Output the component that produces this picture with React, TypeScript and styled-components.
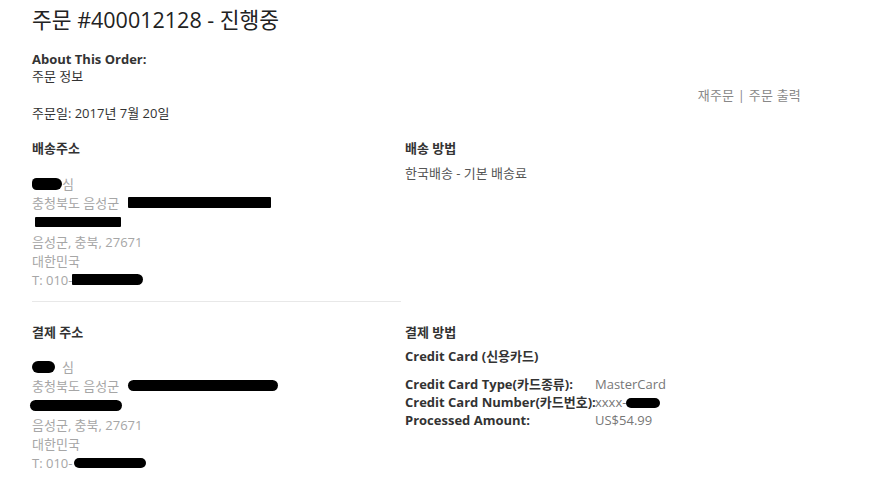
import React from "react";
import styled, { createGlobalStyle } from "styled-components";

const GlobalStyle = createGlobalStyle`
  html, body { margin: 0; padding: 0; background: #fff; }
  body {
    font-family: "Open Sans", "Noto Sans CJK KR", sans-serif;
    font-size: 13px;
    color: #333;
  }
`;

const Page = styled.div`
  padding: 5px 74px 0 32px;
  width: 875px;
  box-sizing: border-box;
`;

const Title = styled.h1`
  margin: 0;
  font-size: 21.5px;
  font-weight: 400;
  line-height: 30px;
  color: #222;
`;

const InfoRow = styled.div`
  display: flex;
  justify-content: space-between;
  align-items: flex-start;
  margin-top: 16px;
`;

const InfoBlock = styled.div`
  display: flex;
  flex-direction: column;
`;

const Strong = styled.div`
  font-weight: 700;
  line-height: 17px;
  color: #333;
`;

const Plain = styled.div<{ $top?: number; $tone?: string }>`
  line-height: 17px;
  color: ${(p) => p.$tone || "#333"};
  margin-top: ${(p) => p.$top || 0}px;
`;

const Actions = styled.div`
  margin-top: 36px;
  color: #888;
  line-height: 17px;
  letter-spacing: 0.2px;
`;

const Grid = styled.div`
  display: grid;
  grid-template-columns: 369px 1fr;
  column-gap: 4px;
  margin-top: 18px;
`;

const Section = styled.div<{ $pad?: number }>`
  padding-top: ${(p) => p.$pad || 0}px;
`;

const Heading = styled.div`
  font-weight: 700;
  line-height: 17px;
  color: #333;
`;

const Address = styled.div<{ $top: number }>`
  margin-top: ${(p) => p.$top}px;
  color: #a6a6a6;
`;

const Line = styled.div`
  display: flex;
  align-items: center;
  height: 19.2px;
  white-space: nowrap;
`;

const Blot = styled.span<{ $w: number; $h?: number; $r?: string; $ml?: number }>`
  display: inline-block;
  flex: none;
  width: ${(p) => p.$w}px;
  height: ${(p) => p.$h || 11}px;
  background: #000;
  border-radius: ${(p) => p.$r || "2px"};
  margin-left: ${(p) => p.$ml || 0}px;
`;

const Divider = styled.hr`
  grid-column: 1 / 2;
  border: 0;
  border-top: 1px solid #e8e8e8;
  margin: 12px 0 0;
  width: 369px;
`;

const Spacer = styled.div``;

const MethodText = styled.div`
  margin-top: 8px;
  line-height: 17px;
  color: #555;
`;

const CardTitle = styled.div`
  margin-top: 7px;
  font-weight: 700;
  line-height: 17px;
  color: #333;
`;

const CardTable = styled.div`
  margin-top: 11px;
  display: grid;
  grid-template-columns: 190px 1fr;
  row-gap: 1px;
  line-height: 17px;
`;

const CardLabel = styled.div`
  font-weight: 700;
  color: #333;
  white-space: nowrap;
`;

const CardValue = styled.div`
  color: #777;
  display: flex;
  align-items: center;
  white-space: nowrap;
`;

const Name = styled.span<{ $ml?: number }>`
  margin-left: ${(p) => p.$ml || 0}px;
`;

export default function App() {
  return (
    <>
      <GlobalStyle />
      <Page>
        <Title>주문 #400012128 - 진행중</Title>
        <InfoRow>
          <InfoBlock>
            <Strong>About This Order:</Strong>
            <Plain>주문 정보</Plain>
            <Plain $top={20}>주문일: 2017년 7월 20일</Plain>
          </InfoBlock>
          <Actions>재주문 | 주문 출력</Actions>
        </InfoRow>

        <Grid>
          <Section $pad={0}>
            <Heading>배송주소</Heading>
            <Address $top={17}>
              <Line>
                <Blot $w={30} $h={12} $r="6px 8px 8px 6px" />
                <Name>심</Name>
              </Line>
              <Line>
                충청북도 음성군
                <Blot $w={143} $h={11} $r="1px" $ml={9} />
              </Line>
              <Line>
                <Blot $w={86} $h={10} $r="1px" $ml={3} />
              </Line>
              <Line>음성군, 충북, 27671</Line>
              <Line>대한민국</Line>
              <Line>
                T: 010-
                <Blot $w={71} $h={11} $r="1px 6px 6px 1px" />
              </Line>
            </Address>
          </Section>
          <Section>
            <Heading>배송 방법</Heading>
            <MethodText>한국배송 - 기본 배송료</MethodText>
          </Section>

          <Divider />
          <Spacer />

          <Section $pad={22}>
            <Heading>결제 주소</Heading>
            <Address $top={16}>
              <Line>
                <Blot $w={23} $h={12} $r="6px" />
                <Name $ml={7}>심</Name>
              </Line>
              <Line>
                충청북도 음성군
                <Blot $w={150} $h={11} $r="6px" $ml={9} />
              </Line>
              <Line>
                <Blot $w={92} $h={11} $r="6px" $ml={-2} />
              </Line>
              <Line>음성군, 충북, 27671</Line>
              <Line>대한민국</Line>
              <Line>
                T: 010-
                <Blot $w={72} $h={10} $r="5px" $ml={2} />
              </Line>
            </Address>
          </Section>
          <Section $pad={22}>
            <Heading>결제 방법</Heading>
            <CardTitle>Credit Card (신용카드)</CardTitle>
            <CardTable>
              <CardLabel>Credit Card Type(카드종류):</CardLabel>
              <CardValue>MasterCard</CardValue>
              <CardLabel>Credit Card Number(카드번호):</CardLabel>
              <CardValue>
                xxxx-
                <Blot $w={34} $h={10} $r="5px" />
              </CardValue>
              <CardLabel>Processed Amount:</CardLabel>
              <CardValue>US$54.99</CardValue>
            </CardTable>
          </Section>
        </Grid>
      </Page>
    </>
  );
}
